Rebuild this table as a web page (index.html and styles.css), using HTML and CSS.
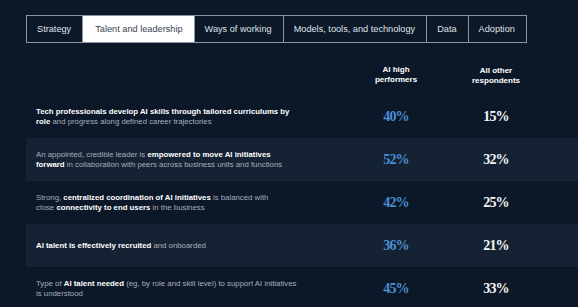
FILE: index.html
```html
<!DOCTYPE html>
<html>
<head>
<meta charset="utf-8">
<link rel="stylesheet" href="styles.css">
</head>
<body>
<div class="page">
  <nav class="tabs">
    <div class="tab">Strategy</div>
    <div class="tab active">Talent and leadership</div>
    <div class="tab">Ways of working</div>
    <div class="tab">Models, tools, and technology</div>
    <div class="tab">Data</div>
    <div class="tab">Adoption</div>
  </nav>
  <div class="table">
    <div class="row head">
      <div class="desc"></div>
      <div class="col-h">AI high<br>performers</div>
      <div class="col-h low">All other<br>respondents</div>
    </div>
    <div class="row">
      <div class="desc"><b>Tech professionals develop AI skills through tailored curriculums by<br>role</b> and progress along defined career trajectories</div>
      <div class="num hi">40%</div>
      <div class="num">15%</div>
    </div>
    <div class="row alt">
      <div class="desc">An appointed, credible leader is <b>empowered to move AI initiatives<br>forward</b> in collaboration with peers across business units and functions</div>
      <div class="num hi">52%</div>
      <div class="num">32%</div>
    </div>
    <div class="row">
      <div class="desc">Strong, <b>centralized coordination of AI initiatives</b> is balanced with<br>close <b>connectivity to end users</b> in the business</div>
      <div class="num hi">42%</div>
      <div class="num">25%</div>
    </div>
    <div class="row alt">
      <div class="desc"><b>AI talent is effectively recruited</b> and onboarded</div>
      <div class="num hi">36%</div>
      <div class="num">21%</div>
    </div>
    <div class="row">
      <div class="desc">Type of <b>AI talent needed</b> (eg, by role and skill level) to support AI initiatives<br>is understood</div>
      <div class="num hi">45%</div>
      <div class="num">33%</div>
    </div>
  </div>
</div>
</body>
</html>
```
FILE: styles.css
```css
html, body {
  margin: 0;
  padding: 0;
  background: #0c1727;
  overflow: hidden;
}
.page {
  width: 578px;
  height: 307px;
  padding: 15px 0 0 26px;
  box-sizing: border-box;
  font-family: "Liberation Sans", Arial, sans-serif;
  color: #ffffff;
}
.tabs {
  display: flex;
  border: 1px solid #8a95a3;
  width: max-content;
}
.tab {
  height: 26px;
  padding: 0 11px 0 10px;
  display: flex;
  align-items: center;
  font-size: 9.2px;
  color: #dfe3e8;
  border-left: 1px solid #8a95a3;
}
.tab:first-child { border-left: none; }
.tab.active {
  background: #ffffff;
  color: #3a4250;
  padding-left: 12px;
}
.table {
  margin-top: 12px;
}
.row {
  display: grid;
  grid-template-columns: 320px 100px 100px 1fr;
  height: 43px;
  align-items: center;
}
.row.head {
  height: 40px;
}
.row.alt {
  background: #152233;
}
.desc {
  padding-left: 10px;
  font-size: 7.8px;
  line-height: 9.5px;
  color: #a6aeba;
  white-space: nowrap;
}
.desc b {
  color: #ffffff;
  font-weight: 700;
}
.col-h {
  text-align: center;
  font-size: 8px;
  line-height: 10px;
  font-weight: 700;
  color: #ffffff;
}
.col-h.low { padding-top: 2px; }
.num {
  text-align: center;
  font-family: "Liberation Serif", "DejaVu Serif", serif;
  font-size: 14px;
  font-weight: 700;
  letter-spacing: -0.8px;
  color: #f3f4f6;
}
.num.hi {
  color: #4a8fd3;
}
```
